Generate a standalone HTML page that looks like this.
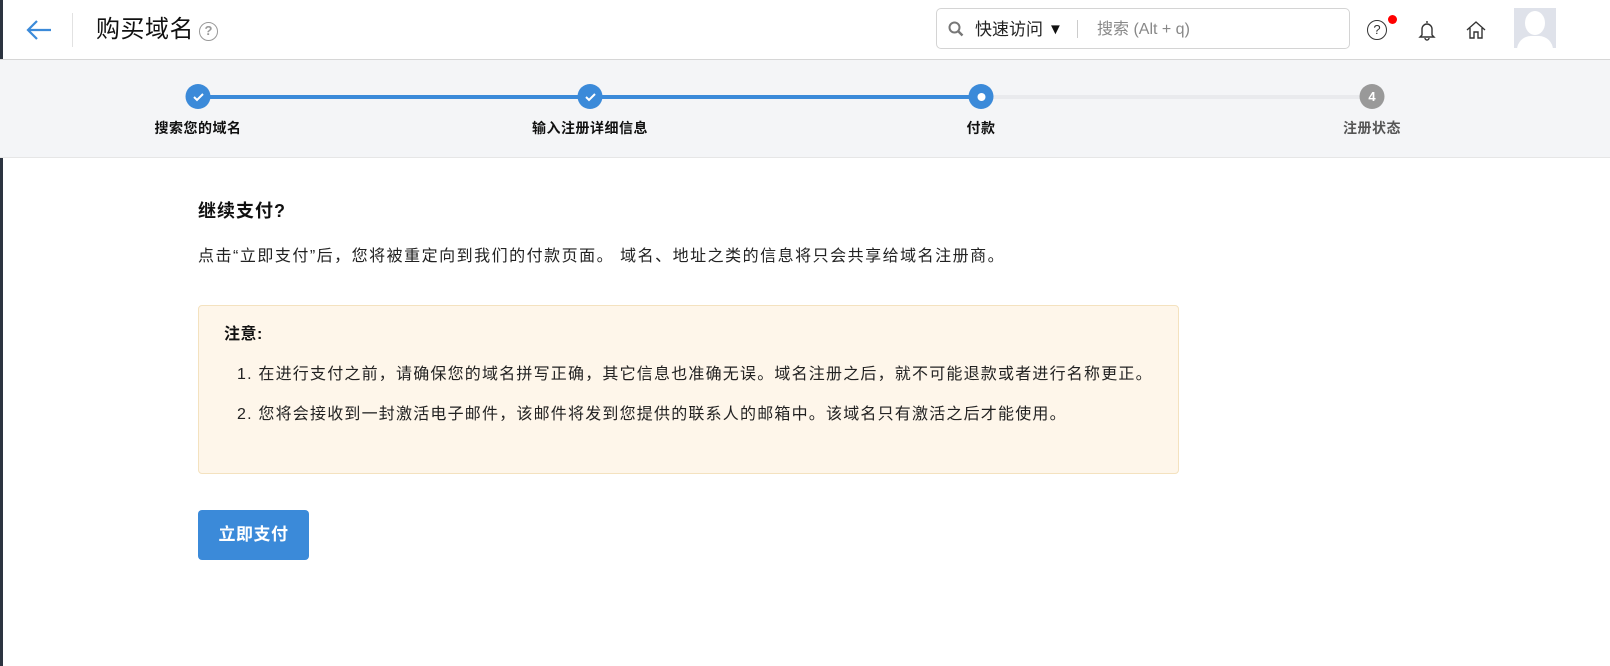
<!DOCTYPE html>
<html><head><meta charset="utf-8"><style>
*{margin:0;padding:0;box-sizing:border-box}
body{width:1610px;height:666px;background:#fff;font-family:"Liberation Sans","Noto Sans CJK SC",sans-serif;color:#111;position:relative;overflow:hidden}
.a{position:absolute}
.lbl{position:absolute;top:118px;font-size:14px;letter-spacing:0.5px;font-weight:bold;transform:translateX(-50%);white-space:nowrap}
.circ{position:absolute;top:84px;width:25px;height:25px;border-radius:50%;background:#3b8ad9;display:flex;align-items:center;justify-content:center;transform:translateX(-50%)}
.t{font-size:16px;letter-spacing:1.2px;line-height:22px;color:#222;white-space:nowrap}
</style></head><body>
<div class="a" style="left:0;top:0;width:3px;height:666px;background:#2c3440"></div>
<svg class="a" style="left:25px;top:19px" width="28" height="22" viewBox="0 0 28 22"><path d="M26 11H3M12 2L3 11l9 9" fill="none" stroke="#3b8ad9" stroke-width="2.2"/></svg>
<div class="a" style="left:72px;top:13px;width:1px;height:34px;background:#e2e2e2"></div>
<div class="a" style="left:96px;top:13px;font-size:24px;letter-spacing:0.5px;line-height:34px;color:#111">购买域名</div>
<div class="a" style="left:199px;top:22px;width:19px;height:19px;border:1.5px solid #999;border-radius:50%;color:#999;font-size:13px;line-height:16px;text-align:center;font-weight:bold">?</div>
<div class="a" style="left:0;top:59px;width:1610px;height:1px;background:#d6d6d6"></div>
<div class="a" style="left:936px;top:8px;width:414px;height:41px;border:1px solid #d4d4d4;border-radius:5px"></div>
<svg class="a" style="left:948px;top:21px" width="16" height="16" viewBox="0 0 16 16"><circle cx="6.5" cy="6.5" r="5" fill="none" stroke="#777" stroke-width="2"/><path d="M10 10l4.5 4.5" stroke="#777" stroke-width="2.4"/></svg>
<div class="a" style="left:975px;top:19px;font-size:17px;line-height:22px;color:#222">快速访问</div>
<div class="a" style="left:1048px;top:19px;font-size:15px;line-height:22px;color:#111">▼</div>
<div class="a" style="left:1077px;top:20px;width:1px;height:18px;background:#ccc"></div>
<div class="a" style="left:1097px;top:19px;font-size:16px;line-height:22px;color:#888">搜索 (Alt + q)</div>
<div class="a" style="left:1367px;top:20px;width:20px;height:20px;border:1.5px solid #333;border-radius:50%;font-size:13px;line-height:17px;text-align:center;color:#333">?</div>
<div class="a" style="left:1388px;top:15px;width:9px;height:9px;border-radius:50%;background:#f00"></div>
<svg class="a" style="left:1417px;top:19px" width="20" height="22" viewBox="0 0 20 22"><path d="M10 2v2M5 16V10a5 5 0 0 1 10 0v6l2 2H3z M8 19a2 2 0 0 0 4 0" fill="none" stroke="#333" stroke-width="1.4"/></svg>
<svg class="a" style="left:1465px;top:19px" width="22" height="22" viewBox="0 0 22 22"><path d="M2 11L11 3l9 8M5 9v10h4v-6h4v6h4V9" fill="none" stroke="#333" stroke-width="1.4"/></svg>
<div class="a" style="left:1514px;top:8px;width:42px;height:40px;background:#dfe2ea;overflow:hidden"><div class="a" style="left:11px;top:3px;width:20px;height:24px;border-radius:50%;background:#fff"></div><div class="a" style="left:3px;top:28px;width:36px;height:20px;border-radius:14px 14px 0 0;background:#fff"></div></div>
<div class="a" style="left:0;top:60px;width:1610px;height:98px;background:#f4f5f7;border-bottom:1px solid #e6e6e6"></div>
<div class="a" style="left:198px;top:95px;width:783px;height:4px;background:#3b8ad9"></div>
<div class="a" style="left:981px;top:95px;width:391px;height:4px;background:#e9eaed"></div>
<div class="circ" style="left:198px"><svg width="12" height="10" viewBox="0 0 12 10"><path d="M1.5 5l3 3 6-6" fill="none" stroke="#fff" stroke-width="2"/></svg></div>
<div class="circ" style="left:590px"><svg width="12" height="10" viewBox="0 0 12 10"><path d="M1.5 5l3 3 6-6" fill="none" stroke="#fff" stroke-width="2"/></svg></div>
<div class="circ" style="left:981px"><div style="width:8px;height:8px;border-radius:50%;background:#fff"></div></div>
<div class="circ" style="left:1372px;background:#999;color:#fff;font-size:13px;font-weight:bold">4</div>
<div class="lbl" style="left:198px">搜索您的域名</div>
<div class="lbl" style="left:590px">输入注册详细信息</div>
<div class="lbl" style="left:981px">付款</div>
<div class="lbl" style="left:1372px;color:#555">注册状态</div>
<div class="a" style="left:198px;top:199px;font-size:18px;letter-spacing:1px;font-weight:bold;line-height:24px">继续支付?</div>
<div class="a t" style="left:198px;top:246px;letter-spacing:1.5px">点击“立即支付”后，您将被重定向到我们的付款页面。 域名、地址之类的信息将只会共享给域名注册商。</div>
<div class="a" style="left:198px;top:305px;width:981px;height:169px;background:#fef6ea;border:1px solid #f4e2bf;border-radius:4px"></div>
<div class="a" style="left:224px;top:324px;font-size:16px;letter-spacing:0.5px;font-weight:bold;line-height:22px">注意:</div>
<div class="a t" style="left:237px;top:364px">1. 在进行支付之前，请确保您的域名拼写正确，其它信息也准确无误。域名注册之后，就不可能退款或者进行名称更正。</div>
<div class="a t" style="left:237px;top:404px">2. 您将会接收到一封激活电子邮件，该邮件将发到您提供的联系人的邮箱中。该域名只有激活之后才能使用。</div>
<div class="a" style="left:198px;top:510px;width:111px;height:50px;background:#3b8ad9;border-radius:4px;color:#fff;font-size:17px;letter-spacing:0.5px;font-weight:bold;line-height:50px;text-align:center">立即支付</div>
</body></html>
